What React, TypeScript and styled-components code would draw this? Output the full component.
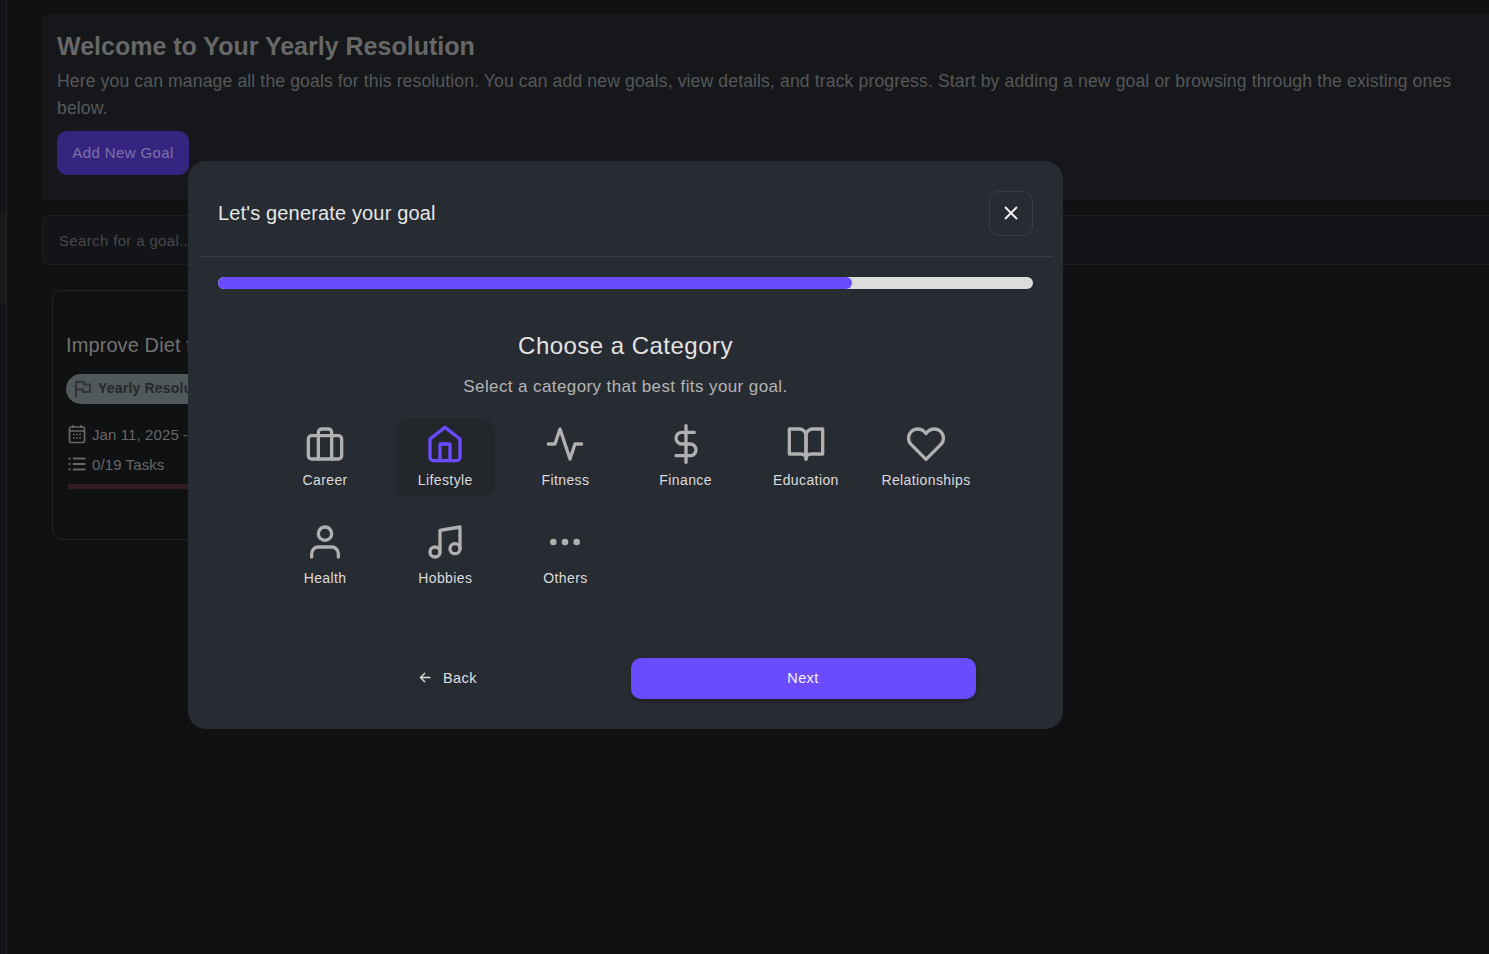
import React from "react";
import styled, { createGlobalStyle } from "styled-components";

const Global = createGlobalStyle`
  html, body { margin: 0; padding: 0; height: 100%; background: #0f1113; overflow: hidden; }
  * { box-sizing: border-box; }
  body { font-family: "Liberation Sans", Arial, sans-serif; }
`;

const Page = styled.div`
  display: flex;
  width: 1489px;
  height: 954px;
  background: #0f1113;
  overflow: hidden;
`;
const Rail = styled.aside`
  position: relative;
  flex: 0 0 7px;
  background: #13151a;
  border-right: 1px solid #222426;
  overflow: hidden;
`;
const RailHandle = styled.div`
  position: absolute;
  left: 0;
  top: 212px;
  width: 6px;
  height: 92px;
  border-radius: 10px 0 0 10px;
  background: #1b1b1a;
`;
const Main = styled.main`
  flex: none;
  width: 1482px;
  padding: 14px 0 0 35px;
  display: flex;
  flex-direction: column;
`;
const Welcome = styled.section`
  height: 186px;
  padding: 14px 15px 0;
  background: #15171b;
  border-radius: 4px 0 0 4px;
`;
const WelcomeTitle = styled.h1`
  margin: 0;
  height: 36px;
  font-size: 25px;
  line-height: 36px;
  font-weight: 700;
  color: #676767;
`;
const WelcomeText = styled.p`
  margin: 4px 0 9px;
  font-size: 17.6px;
  line-height: 27px;
  letter-spacing: 0.12px;
  color: #565759;
`;
const AddButton = styled.button`
  display: block;
  width: 132px;
  height: 44px;
  padding: 0 0 2px;
  border: 0;
  border-radius: 10px;
  background: #352480;
  color: #7d72a8;
  font: 15px "Liberation Sans", Arial, sans-serif;
  letter-spacing: 0.4px;
`;
const Search = styled.div`
  margin-top: 15px;
  height: 50px;
  padding: 1px 16px 0;
  display: flex;
  align-items: center;
  border: 1px solid #1d1f22;
  border-right: 0;
  border-radius: 8px 0 0 8px;
  background: #121417;
  color: #48494b;
  font-size: 15px;
  letter-spacing: 0.35px;
`;
const GoalCard = styled.article`
  margin: 25px 0 0 10px;
  width: 420px;
  height: 250px;
  padding: 39px 13px 0;
  border: 1px solid #232528;
  border-radius: 10px;
`;
const GoalTitle = styled.h2`
  margin: 0;
  height: 30px;
  font-size: 20px;
  line-height: 30px;
  font-weight: 400;
  color: #727272;
  white-space: nowrap;
  letter-spacing: 0.1px;
`;
const Pill = styled.div`
  margin-top: 14px;
  display: inline-flex;
  align-items: center;
  gap: 6px;
  height: 30px;
  padding: 0 14px 2px 8px;
  border-radius: 15px;
  background: #50585b;
  color: #26282a;
  font-size: 14px;
  font-weight: 700;
  letter-spacing: 0.2px;
  svg { flex: none; margin-top: 2px; }
`;
const MetaRow = styled.div`
  display: flex;
  align-items: center;
  gap: 6px;
  height: 30px;
  padding-left: 2px;
  color: #676767;
  font-size: 15px;
  letter-spacing: 0.1px;
  white-space: nowrap;
  svg { flex: none; }
`;
const MetaList = styled.div`
  margin-top: 15px;
`;
const Bar = styled.div`
  margin: 5px 0 0 2px;
  height: 5px;
  background: #361d21;
`;

const Modal = styled.div`
  position: fixed;
  left: 188px;
  top: 161px;
  width: 875px;
  height: 568px;
  padding: 0 10px;
  background: #272b32;
  border-radius: 18px;
`;
const Header = styled.header`
  height: 96px;
  padding: 9px 20px 0;
  display: flex;
  align-items: center;
  justify-content: space-between;
  border-bottom: 1px solid #3a3c3e;
`;
const HeaderTitle = styled.h3`
  margin: 0;
  font-size: 20px;
  font-weight: 400;
  color: #e6e6e6;
  letter-spacing: 0.15px;
`;
const Close = styled.button`
  width: 44px;
  height: 45px;
  padding: 0;
  display: flex;
  align-items: center;
  justify-content: center;
  background: transparent;
  border: 1px solid #3b3d3f;
  border-radius: 10px;
  color: #f0f0f0;
`;
const Track = styled.div`
  margin: 20px 20px 0;
  height: 12px;
  border-radius: 6px;
  background: #dcdcdc;
  overflow: hidden;
`;
const Fill = styled.div`
  height: 100%;
  border-radius: 6px;
  background: #6a4bff;
`;
const Body = styled.div`
  display: flex;
  flex-direction: column;
  align-items: center;
`;
const StepTitle = styled.h2`
  margin: 41px 0 0;
  height: 32px;
  font-size: 24px;
  line-height: 32px;
  font-weight: 400;
  color: #e2e2e2;
  letter-spacing: 0.47px;
`;
const StepText = styled.p`
  margin: 13px 0 0;
  height: 24px;
  font-size: 17px;
  line-height: 24px;
  letter-spacing: 0.4px;
  color: #b4b4b4;
`;
const Grid = styled.div`
  margin: 19px 1px 0 0;
  width: 700px;
  display: grid;
  grid-template-columns: repeat(6, 100.2px);
  grid-auto-rows: 79px;
  gap: 19px 20px;
`;
const Tile = styled.div<{ $active?: boolean }>`
  display: flex;
  flex-direction: column;
  align-items: center;
  padding-top: 6px;
  border-radius: 14px;
  background: ${(p) => (p.$active ? "#23272c" : "transparent")};
  color: ${(p) => (p.$active ? "#6a4bff" : "#b0b0b0")};
  white-space: nowrap;
`;
const TileLabel = styled.span`
  margin-top: 6px;
  font-size: 14px;
  line-height: 20px;
  color: #dcdcdc;
  letter-spacing: 0.4px;
`;
const Footer = styled.footer`
  margin: 63px auto 0;
  width: 700px;
  display: grid;
  grid-template-columns: 345px 345px;
  gap: 10px;
`;
const BackButton = styled.button`
  height: 41px;
  padding: 0 0 2px;
  display: flex;
  align-items: center;
  justify-content: center;
  gap: 11px;
  background: transparent;
  border: 0;
  color: #e0e0e0;
  font: 14.5px "Liberation Sans", Arial, sans-serif;
  letter-spacing: 0.45px;
`;
const NextButton = styled.button`
  height: 41px;
  padding: 0 0 2px;
  background: #6a4bff;
  border: 0;
  border-radius: 10px;
  box-shadow: 0 2px 5px rgba(0, 0, 0, 0.25);
  color: #f2f2f2;
  font: 14.5px "Liberation Sans", Arial, sans-serif;
  letter-spacing: 0.4px;
`;

const Icon = ({ children, size = 40, sw = 2 }: { children: React.ReactNode; size?: number; sw?: number }) => (
  <svg width={size} height={size} viewBox="0 0 24 24" fill="none" stroke="currentColor" strokeWidth={sw} strokeLinecap="round" strokeLinejoin="round">
    {children}
  </svg>
);

const categories: { label: string; active?: boolean; icon: React.ReactNode }[] = [
  { label: "Career", icon: <><rect x="2" y="7" width="20" height="14" rx="2" /><path d="M16 21V5a2 2 0 0 0-2-2h-4a2 2 0 0 0-2 2v16" /></> },
  { label: "Lifestyle", active: true, icon: <><path d="M3 9l9-7 9 7v11a2 2 0 0 1-2 2H5a2 2 0 0 1-2-2z" /><polyline points="9 22 9 12 15 12 15 22" /></> },
  { label: "Fitness", icon: <polyline points="22 12 18 12 15 21 9 3 6 12 2 12" /> },
  { label: "Finance", icon: <><line x1="12" y1="1" x2="12" y2="23" /><path d="M17 5H9.5a3.5 3.5 0 0 0 0 7h5a3.5 3.5 0 0 1 0 7H6" /></> },
  { label: "Education", icon: <><path d="M2 3h6a4 4 0 0 1 4 4v14a3 3 0 0 0-3-3H2z" /><path d="M22 3h-6a4 4 0 0 0-4 4v14a3 3 0 0 1 3-3h7z" /></> },
  { label: "Relationships", icon: <path d="M20.84 4.61a5.5 5.5 0 0 0-7.78 0L12 5.67l-1.06-1.06a5.5 5.5 0 0 0-7.78 7.78l1.06 1.06L12 21.23l7.78-7.78 1.06-1.06a5.5 5.5 0 0 0 0-7.78z" /> },
  { label: "Health", icon: <><path d="M20 21v-2a4 4 0 0 0-4-4H8a4 4 0 0 0-4 4v2" /><circle cx="12" cy="7" r="4" /></> },
  { label: "Hobbies", icon: <><path d="M9 18V5l12-2v13" /><circle cx="6" cy="18" r="3" /><circle cx="18" cy="16" r="3" /></> },
  { label: "Others", icon: <><circle cx="12" cy="12" r="1" /><circle cx="19" cy="12" r="1" /><circle cx="5" cy="12" r="1" /></> },
];

export default function App() {
  return (
    <>
      <Global />
      <Page>
        <Rail><RailHandle /></Rail>
        <Main>
          <Welcome>
            <WelcomeTitle>Welcome to Your Yearly Resolution</WelcomeTitle>
            <WelcomeText>
              Here you can manage all the goals for this resolution. You can add new goals, view details, and track progress. Start by adding a new goal or browsing through the existing ones below.
            </WelcomeText>
            <AddButton>Add New Goal</AddButton>
          </Welcome>
          <Search>Search for a goal...</Search>
          <GoalCard>
            <GoalTitle>Improve Diet to Boost Energy</GoalTitle>
            <Pill>
              <svg width="18" height="20" viewBox="0 0 18 20" fill="none" stroke="#303436" strokeWidth="1.9">
                <path d="M2 19V3h8v2.500h6v7.500H9v-2.500H2" />
              </svg>
              Yearly Resolution
            </Pill>
            <MetaList>
              <MetaRow>
                <svg width="18" height="20" viewBox="0 0 18 20" fill="none" stroke="#676767" strokeWidth="1.7">
                  <rect x="1.5" y="3" width="15" height="15.5" rx="1.5" />
                  <path d="M1.500 7h15M5 1v3M13 1v3M5 10.500h1.800M8.100 10.500h1.800M11.200 10.500H13M5 14h1.800M8.100 14h1.800M11.200 14H13" />
                </svg>
                Jan 11, 2025 - Dec 31, 2025
              </MetaRow>
              <MetaRow>
                <svg width="18" height="14" viewBox="0 0 18 14" fill="none" stroke="#676767" strokeWidth="1.8">
                  <path d="M5 1.500h12.500M5 7h12.500M5 12.500h12.500M0.500 1.500h2M0.500 7h2M0.500 12.500h2" />
                </svg>
                0/19 Tasks
              </MetaRow>
            </MetaList>
            <Bar />
          </GoalCard>
        </Main>
        <Modal>
          <Header>
            <HeaderTitle>Let's generate your goal</HeaderTitle>
            <Close aria-label="Close">
              <svg width="16" height="16" viewBox="0 0 16 16" fill="none" stroke="currentColor" strokeWidth="2">
                <path d="M2 2l12 12M14 2L2 14" />
              </svg>
            </Close>
          </Header>
          <Track><Fill style={{ width: `${(634 / 815) * 100}%` }} /></Track>
          <Body>
            <StepTitle>Choose a Category</StepTitle>
            <StepText>Select a category that best fits your goal.</StepText>
            <Grid>
              {categories.map((c) => (
                <Tile key={c.label} $active={c.active}>
                  <Icon>{c.icon}</Icon>
                  <TileLabel>{c.label}</TileLabel>
                </Tile>
              ))}
            </Grid>
          </Body>
          <Footer>
            <BackButton>
              <svg width="13" height="13" viewBox="0 0 13 13" fill="none" stroke="currentColor" strokeWidth="1.4">
                <path d="M11.500 6.500H1.500M6 2L1.500 6.500 6 11" />
              </svg>
              Back
            </BackButton>
            <NextButton>Next</NextButton>
          </Footer>
        </Modal>
      </Page>
    </>
  );
}
